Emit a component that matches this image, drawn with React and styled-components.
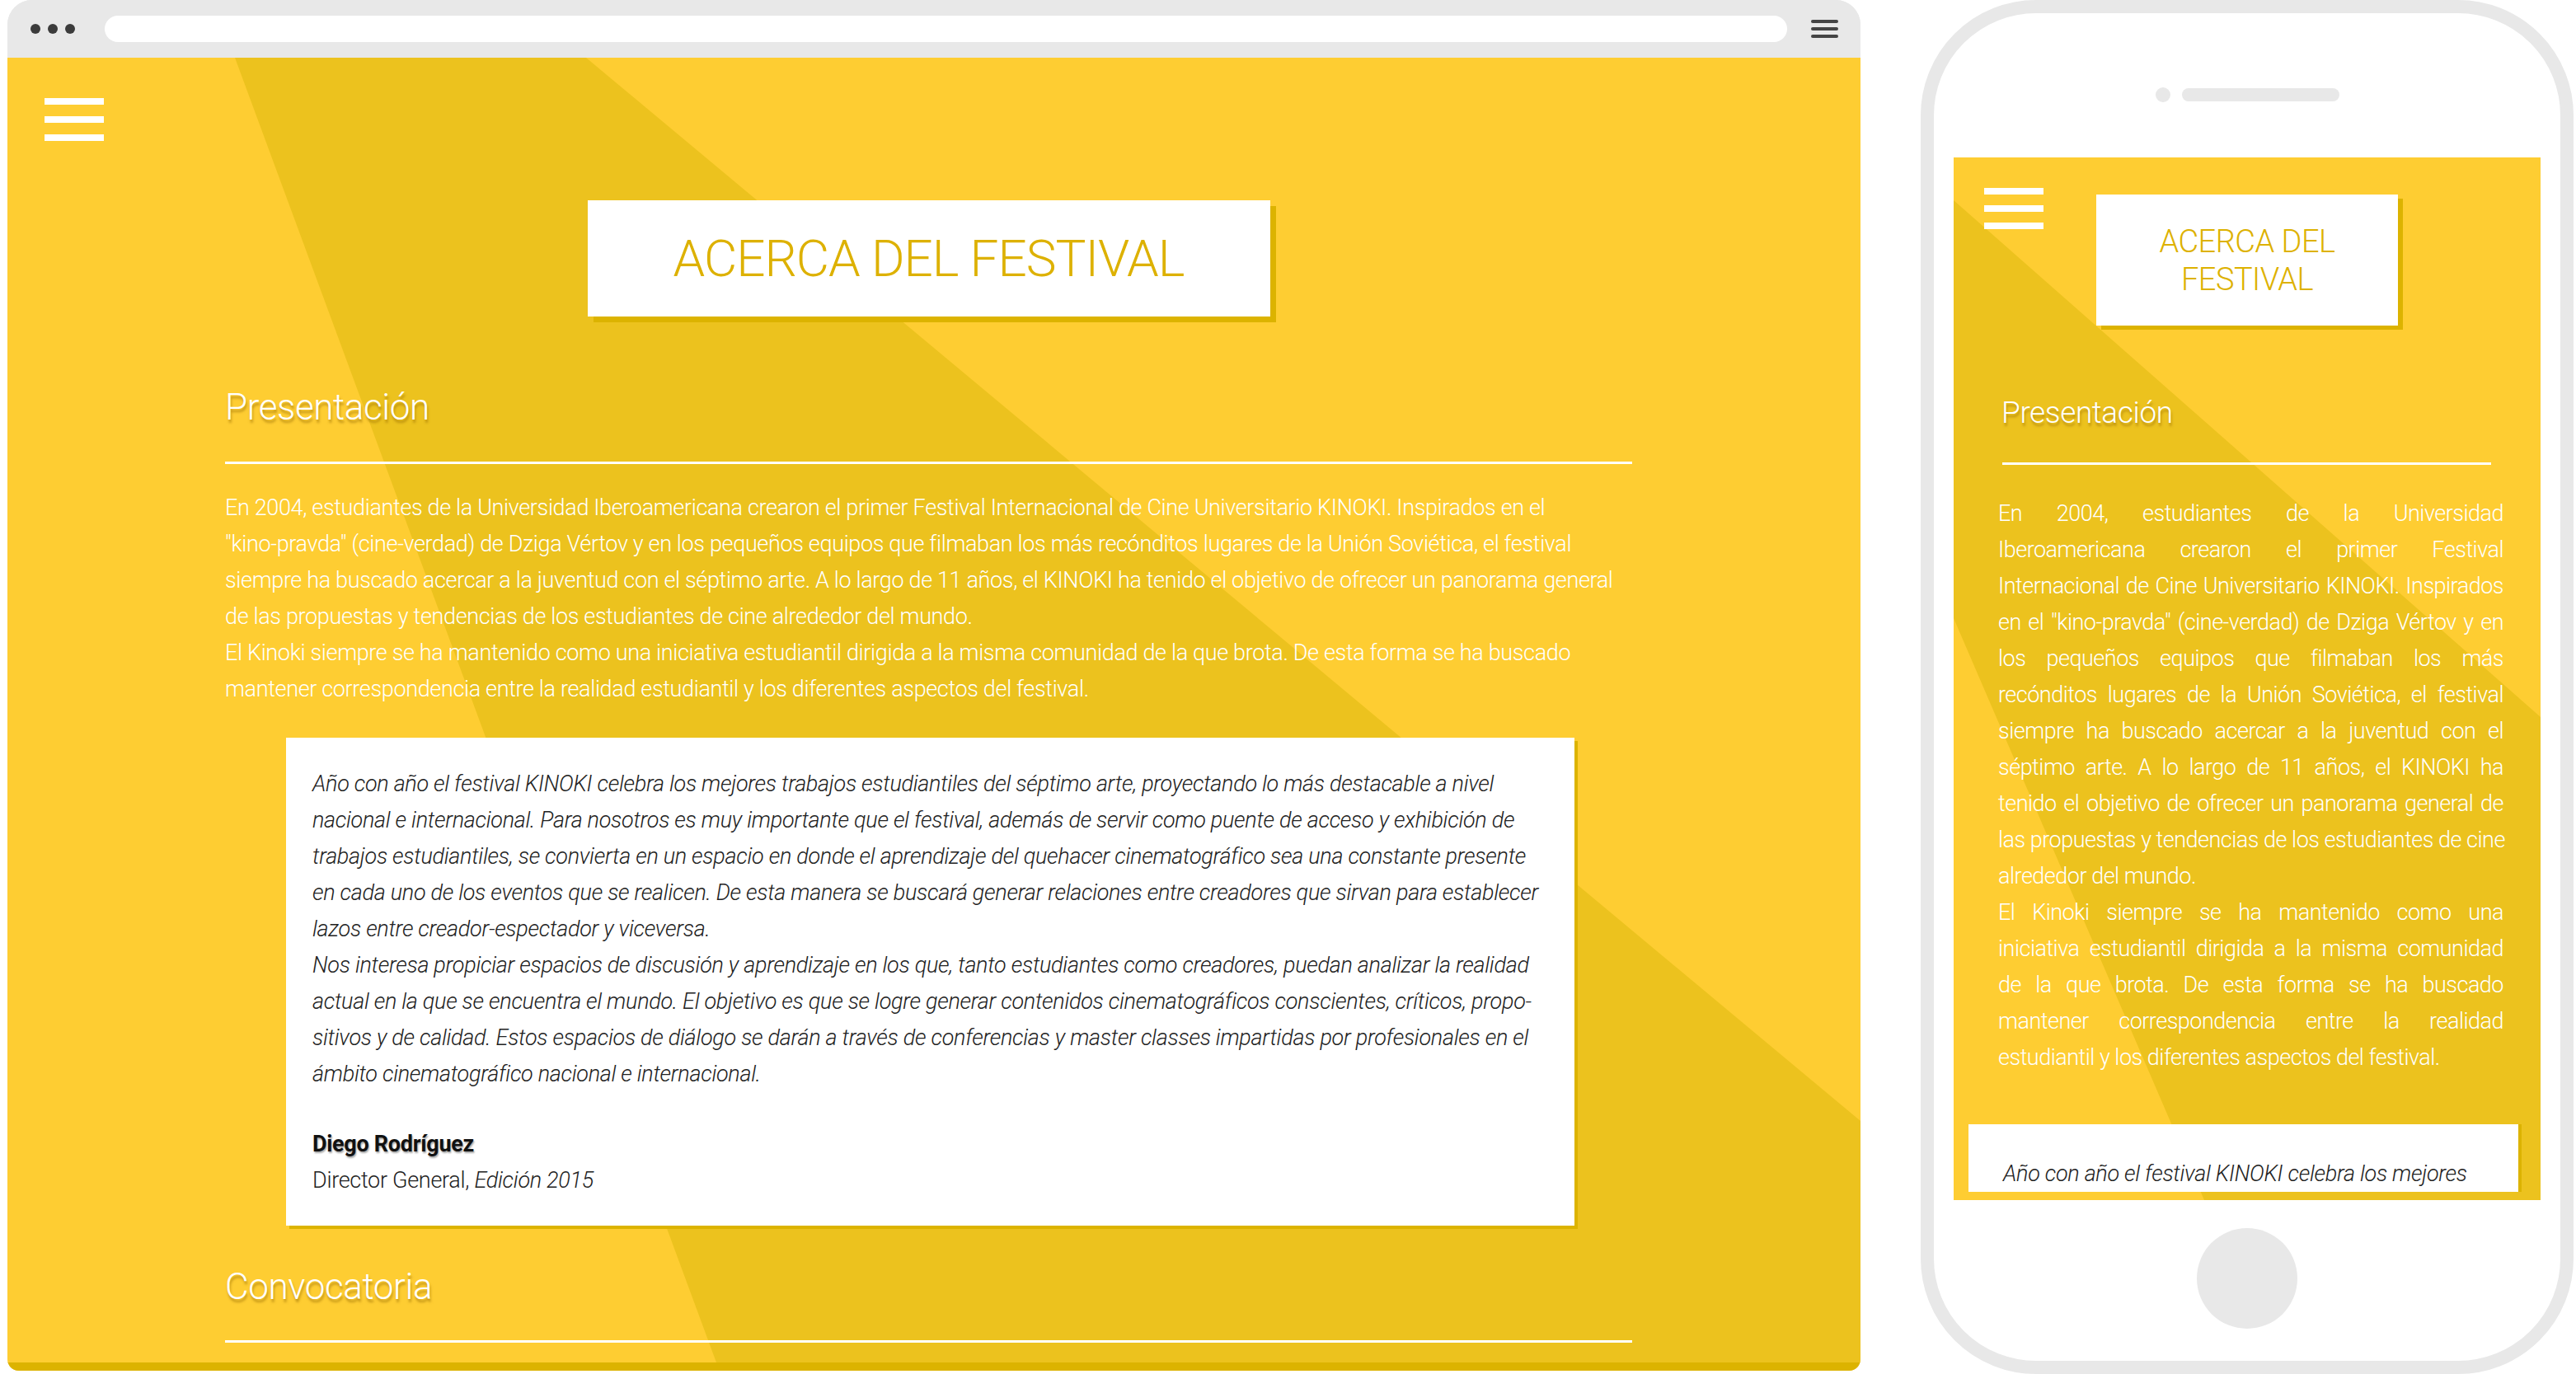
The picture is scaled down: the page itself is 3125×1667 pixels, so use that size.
import React from 'react';
import styled, { createGlobalStyle } from 'styled-components';

const LIGHT = '#FECD32';
const DARK = '#ECC21E';
const SHADOW = '#DCB300';
const GOLD = '#DDB100';
const FRAME = '#E8E8E8';

const GlobalStyle = createGlobalStyle`
  html, body { margin: 0; padding: 0; background: #fff; }
  body {
    width: 3125px;
    height: 1667px;
    overflow: hidden;
    font-family: Roboto, "Liberation Sans", sans-serif;
  }
  *, *::before, *::after { box-sizing: border-box; }
`;

const Stage = styled.div`
  display: flex;
  align-items: flex-start;
  gap: 73px;
  width: 3125px;
  height: 1667px;
  padding-left: 9px;
  background: #fff;
`;

/* ---------- Desktop browser ---------- */

const Browser = styled.div`
  width: 2248px;
  height: 1663px;
  display: flex;
  flex-direction: column;
  border-radius: 30px 30px 14px 14px;
  overflow: hidden;
  background: ${FRAME};
`;

const Chrome = styled.div`
  flex: none;
  height: 70px;
  display: flex;
  align-items: center;
  padding: 0 27px 0 28px;
  background: ${FRAME};
`;

const Dots = styled.div`
  display: flex;
  gap: 9px;
`;

const Dot = styled.span`
  width: 12px;
  height: 12px;
  border-radius: 50%;
  background: #3b3b3b;
`;

const UrlBar = styled.div`
  flex: 1;
  height: 32px;
  margin: 0 29px 0 36px;
  border-radius: 16px;
  background: #fff;
`;

const ChromeMenu = styled.div`
  width: 33px;
  display: flex;
  flex-direction: column;
  gap: 5px;
  span {
    height: 4px;
    border-radius: 2px;
    background: #444;
  }
`;

const Screen = styled.div`
  position: relative;
  flex: 1;
  overflow: hidden;
  background: ${LIGHT};
  border-bottom: 10px solid ${SHADOW};
  &::before {
    content: '';
    position: absolute;
    inset: 0;
    background: ${DARK};
    clip-path: ${(p) => p.$shape};
  }
`;

const Page = styled.div`
  position: relative;
  z-index: 1;
  display: flex;
  flex-direction: column;
  padding: ${(p) => p.$pad || '0'};
`;

const Burger = styled.div`
  width: 72px;
  display: flex;
  flex-direction: column;
  gap: ${(p) => p.$gap}px;
  span {
    height: 8px;
    background: #fff;
  }
`;

const Main = styled.main`
  width: 1707px;
  margin-left: 219px;
  display: flex;
  flex-direction: column;
`;

const TitleBox = styled.div`
  align-self: center;
  width: ${(p) => p.$w}px;
  height: ${(p) => p.$h}px;
  margin-top: ${(p) => p.$top}px;
  display: flex;
  align-items: center;
  justify-content: center;
  text-align: center;
  background: #fff;
  box-shadow: ${(p) => p.$shadow} ${SHADOW};
  color: ${GOLD};
  font-weight: 300;
  font-size: ${(p) => p.$size}px;
  line-height: ${(p) => p.$lh}px;
  letter-spacing: ${(p) => p.$ls}px;
`;

const Heading = styled.h2`
  margin: ${(p) => p.$top}px 0 0 ${(p) => p.$left || 0}px;
  color: #fff;
  font-weight: 300;
  font-size: ${(p) => p.$size}px;
  line-height: ${(p) => p.$lh}px;
  letter-spacing: -0.4px;
  text-shadow: 1px 4px 3px rgba(150, 105, 0, 0.55);
`;

const Rule = styled.hr`
  margin: ${(p) => p.$top}px ${(p) => p.$right || 0}px 0 ${(p) => p.$left || 0}px;
  height: 3px;
  border: 0;
  background: #fff;
`;

const Para = styled.div`
  margin: ${(p) => p.$top}px ${(p) => p.$right || 0}px 0 ${(p) => p.$left || 0}px;
  color: #fff;
  font-weight: 300;
  font-size: 27px;
  line-height: 44px;
  letter-spacing: ${(p) => p.$ls}px;
`;

const Line = styled.span`
  display: block;
  white-space: nowrap;
  text-align: ${(p) => (p.$justify ? 'justify' : 'left')};
  text-align-last: ${(p) => (p.$justify ? 'justify' : 'left')};
`;

const QuoteCard = styled.div`
  margin: ${(p) => p.$top}px ${(p) => p.$right}px 0 ${(p) => p.$left}px;
  padding: ${(p) => p.$pad};
  background: #fff;
  box-shadow: ${(p) => p.$shadow} ${SHADOW};
  color: #222;
  font-size: 27px;
  line-height: 44px;
`;

const Quote = styled.div`
  font-style: italic;
  font-weight: 300;
  letter-spacing: -0.3px;
`;

const Signer = styled.div`
  margin-top: 41px;
  font-weight: 700;
  font-size: 27px;
  letter-spacing: -0.3px;
  color: #111;
  text-shadow: 1px 2px 2px rgba(0, 0, 0, 0.35);
`;

const SignerRole = styled.div`
  font-weight: 300;
  font-size: 27px;
  letter-spacing: -0.3px;
  em { font-style: italic; }
`;

/* ---------- Phone ---------- */

const Phone = styled.div`
  width: 792px;
  height: 1667px;
  display: flex;
  flex-direction: column;
  align-items: center;
  border: 16px solid ${FRAME};
  border-radius: 140px;
  background: #fff;
`;

const Speaker = styled.div`
  margin-top: 90px;
  display: flex;
  align-items: center;
  gap: 14px;
`;

const Camera = styled.span`
  width: 18px;
  height: 18px;
  border-radius: 50%;
  background: ${FRAME};
`;

const Grill = styled.span`
  width: 191px;
  height: 16px;
  border-radius: 8px;
  background: ${FRAME};
`;

const PhoneScreen = styled(Screen)`
  flex: none;
  width: 712px;
  height: 1265px;
  margin-top: 67px;
  border-bottom: 0;
`;

const PhoneHeader = styled.div`
  display: grid;
  grid-template-columns: 1fr 366px 1fr;
  align-items: start;
  > ${Burger} {
    margin: 37px 0 0 37px;
  }
`;

const PhoneBody = styled.div`
  display: flex;
  flex-direction: column;
  padding: 0 27px 0 18px;
`;

const HomeButton = styled.div`
  margin-top: 34px;
  width: 122px;
  height: 122px;
  border-radius: 50%;
  background: ${FRAME};
`;

const desktopPara = [
  'En 2004, estudiantes de la Universidad Iberoamericana crearon el primer Festival Internacional de Cine Universitario KINOKI. Inspirados en el',
  '"kino-pravda" (cine-verdad) de Dziga Vértov y en los pequeños equipos que filmaban los más recónditos lugares de la Unión Soviética, el festival',
  'siempre ha buscado acercar a la juventud con el séptimo arte. A lo largo de 11 años, el KINOKI ha tenido el objetivo de ofrecer un panorama general',
  'de las propuestas y tendencias de los estudiantes de cine alrededor del mundo.',
  'El Kinoki siempre se ha mantenido como una iniciativa estudiantil dirigida a la misma comunidad de la que brota. De esta forma se ha buscado',
  'mantener correspondencia entre la realidad estudiantil y los diferentes aspectos del festival.',
];

const quoteLines = [
  'Año con año el festival KINOKI celebra los mejores trabajos estudiantiles del séptimo arte, proyectando lo más destacable a nivel',
  'nacional e internacional. Para nosotros es muy importante que el festival, además de servir como puente de acceso y exhibición de',
  'trabajos estudiantiles, se convierta en un espacio en donde el aprendizaje del quehacer cinematográfico sea una constante presente',
  'en cada uno de los eventos que se realicen. De esta manera se buscará generar relaciones entre creadores que sirvan para establecer',
  'lazos entre creador-espectador y viceversa.',
  'Nos interesa propiciar espacios de discusión y aprendizaje en los que, tanto estudiantes como creadores, puedan analizar la realidad',
  'actual en la que se encuentra el mundo. El objetivo es que se logre generar contenidos cinematográficos conscientes, críticos, propo-',
  'sitivos y de calidad. Estos espacios de diálogo se darán a través de conferencias y master classes impartidas por profesionales en el',
  'ámbito cinematográfico nacional e internacional.',
];

const phonePara = [
  ['En 2004, estudiantes de la Universidad', true],
  ['Iberoamericana crearon el primer Festival', true],
  ['Internacional de Cine Universitario KINOKI. Inspirados', true],
  ['en el "kino-pravda" (cine-verdad) de Dziga Vértov y en', true],
  ['los pequeños equipos que filmaban los más', true],
  ['recónditos lugares de la Unión Soviética, el festival', true],
  ['siempre ha buscado acercar a la juventud con el', true],
  ['séptimo arte. A lo largo de 11 años, el KINOKI ha', true],
  ['tenido el objetivo de ofrecer un panorama general de', true],
  ['las propuestas y tendencias de los estudiantes de cine', true],
  ['alrededor del mundo.', false],
  ['El Kinoki siempre se ha mantenido como una', true],
  ['iniciativa estudiantil dirigida a la misma comunidad', true],
  ['de la que brota. De esta forma se ha buscado', true],
  ['mantener correspondencia entre la realidad', true],
  ['estudiantil y los diferentes aspectos del festival.', false],
];

const BurgerIcon = ({ gap = 14 }) => (
  <Burger $gap={gap}>
    <span />
    <span />
    <span />
  </Burger>
);

export default function App() {
  return (
    <>
      <GlobalStyle />
      <Stage>
        <Browser>
          <Chrome>
            <Dots>
              <Dot />
              <Dot />
              <Dot />
            </Dots>
            <UrlBar />
            <ChromeMenu>
              <span />
              <span />
              <span />
            </ChromeMenu>
          </Chrome>
          <Screen $shape="polygon(276px 0, 702px 0, 100% 1290px, 100% 100%, 860px 100%)">
            <Page $pad="49px 0 0 45px">
              <BurgerIcon gap={14} />
              <Main>
                <TitleBox $w={828} $h={141} $top={72} $size={62} $lh={70} $ls={-1} $shadow="7px 7px 0">
                  ACERCA DEL FESTIVAL
                </TitleBox>
                <Heading $top={84} $size={44} $lh={52}>Presentación</Heading>
                <Rule $top={40} />
                <Para $top={31} $ls={-0.35}>
                  {desktopPara.map((l) => (
                    <Line key={l}>{l}</Line>
                  ))}
                </Para>
                <QuoteCard $top={37} $left={74} $right={70} $pad="34px 32px 33px 32px" $shadow="4px 4px 0">
                  <Quote>
                    {quoteLines.map((l) => (
                      <Line key={l}>{l}</Line>
                    ))}
                  </Quote>
                  <Signer>Diego Rodríguez</Signer>
                  <SignerRole>
                    Director General, <em>Edición 2015</em>
                  </SignerRole>
                </QuoteCard>
                <Heading $top={48} $size={44} $lh={52}>Convocatoria</Heading>
                <Rule $top={39} />
              </Main>
            </Page>
          </Screen>
        </Browser>

        <Phone>
          <Speaker>
            <Camera />
            <Grill />
          </Speaker>
          <PhoneScreen $shape="polygon(0 52px, 100% 679px, 100% 100%, 304px 100%, 0 559px)">
            <Page>
              <PhoneHeader>
                <BurgerIcon gap={13} />
                <TitleBox $w={366} $h={159} $top={45} $size={38} $lh={46} $ls={-0.5} $shadow="6px 5px 0">
                  ACERCA DEL
                  <br />
                  FESTIVAL
                </TitleBox>
              </PhoneHeader>
              <PhoneBody>
                <Heading $top={84} $left={40} $size={37} $lh={44}>Presentación</Heading>
                <Rule $top={38} $left={41} $right={33} />
                <Para $top={37} $left={36} $right={18} $ls={-0.5}>
                  {phonePara.map(([l, j]) => (
                    <Line key={l} $justify={j}>{l}</Line>
                  ))}
                </Para>
                <QuoteCard $top={59} $left={0} $right={0} $pad="38px 30px 0 42px" $shadow="4px 0 0">
                  <Quote>
                    <Line>Año con año el festival KINOKI celebra los mejores</Line>
                  </Quote>
                </QuoteCard>
              </PhoneBody>
            </Page>
          </PhoneScreen>
          <HomeButton />
        </Phone>
      </Stage>
    </>
  );
}
